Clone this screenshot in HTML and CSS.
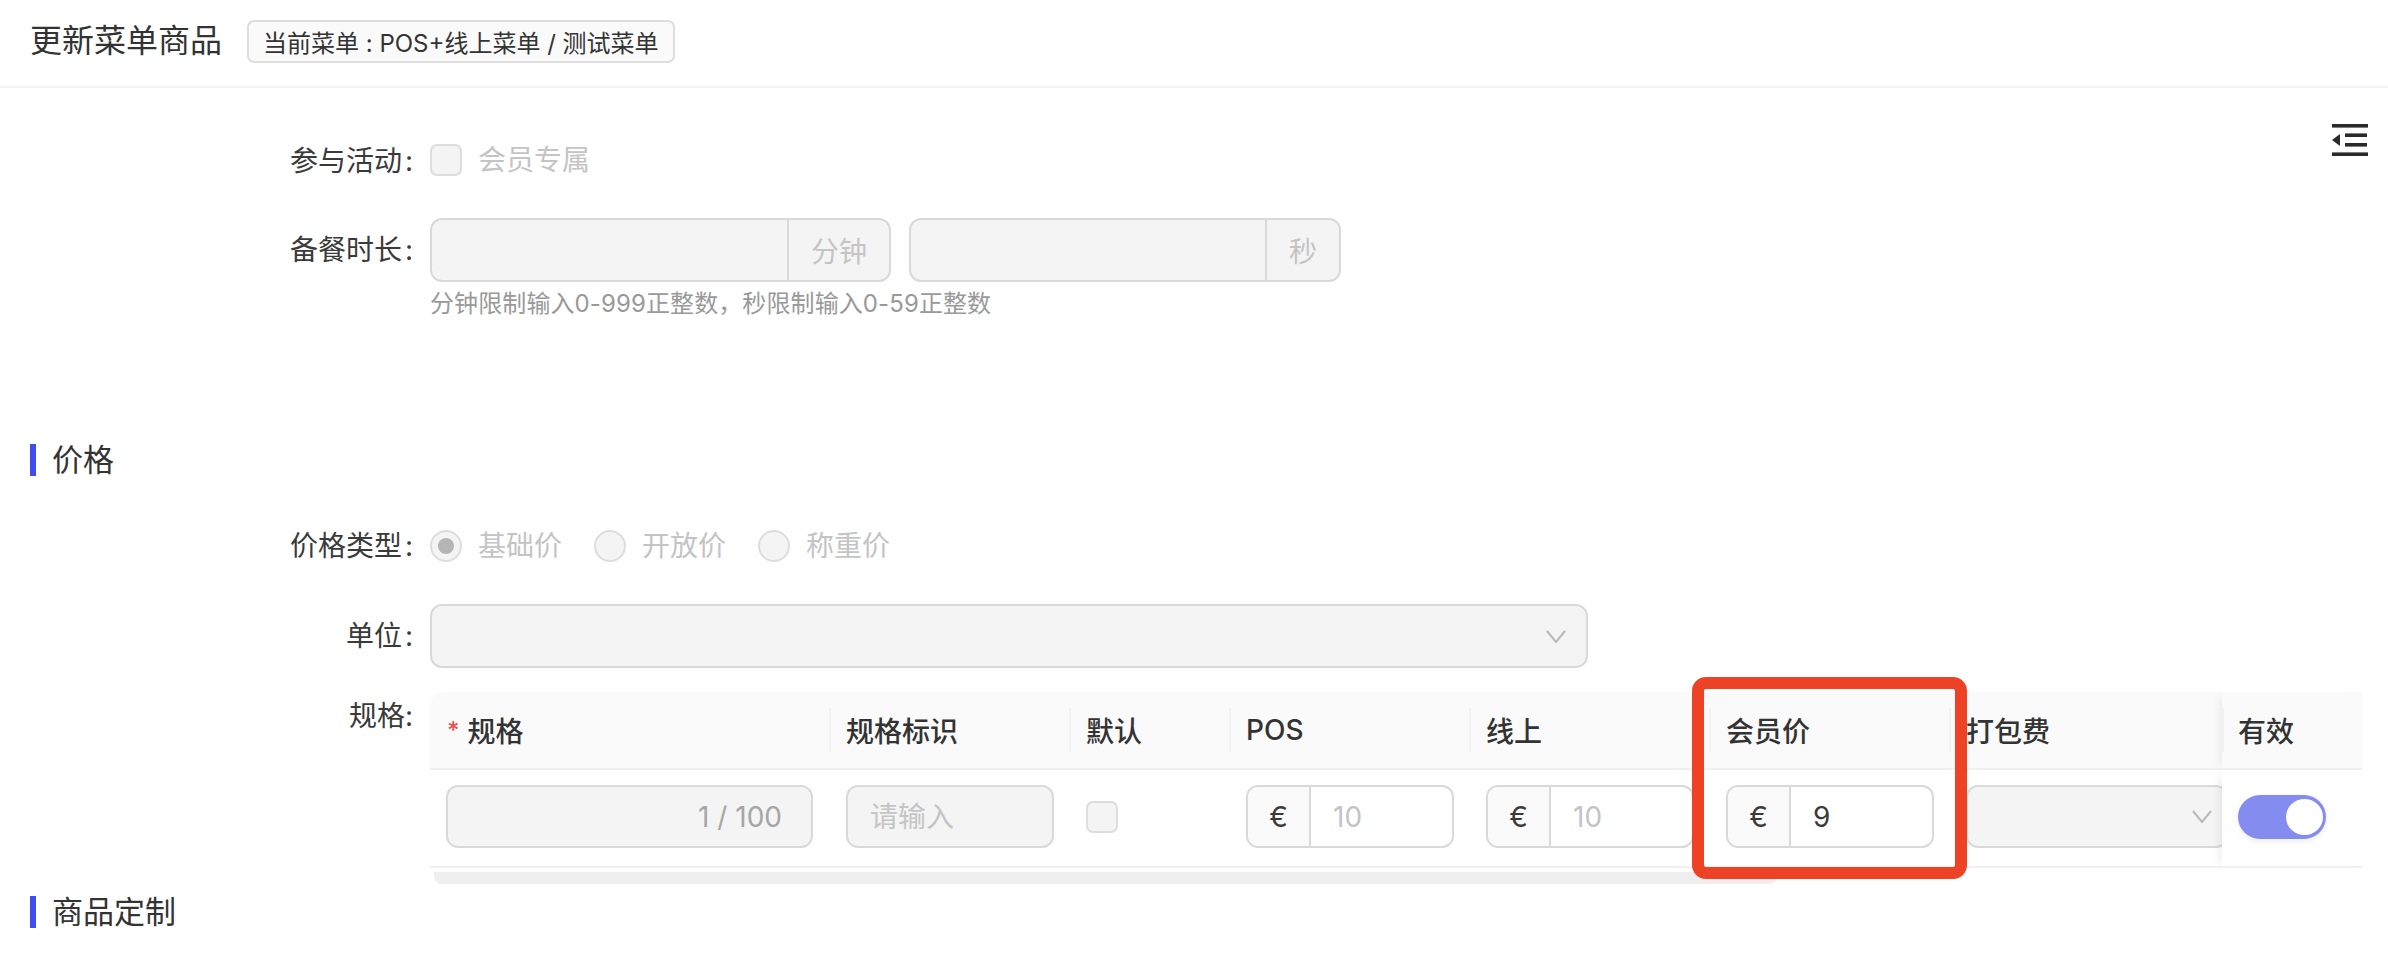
FILE: index.html
```html
<!DOCTYPE html>
<html lang="zh-CN">
<head>
  <meta charset="UTF-8">
  <title>更新菜单商品</title>
  <link rel="stylesheet" href="styles.css">
</head>
<body>

  <!-- Header -->
  <header class="page-header">
    <h1>更新菜单商品</h1>
    <span class="menu-tag">当前菜单 : POS+线上菜单 / 测试菜单</span>
  </header>

  <main class="content">
    <svg class="outline-toggle" width="36" height="32" viewBox="0 0 36 32" fill="#2b2b2b">
      <rect x="0" y="0" width="36" height="3.6"/>
      <rect x="13" y="9.4" width="22" height="3.6"/>
      <rect x="13" y="19" width="22" height="3.6"/>
      <rect x="0" y="28.4" width="36" height="3.6"/>
      <path d="M0 16 L8 10 L8 22 Z"/>
    </svg>

    <div class="form-row first-row">
      <label class="field-label">参与活动<span class="colon">:</span></label>
      <span class="checkbox"></span>
      <span class="option-text">会员专属</span>
    </div>

    <div class="form-row time-row">
      <label class="field-label">备餐时长<span class="colon">:</span></label>
      <div class="addon-input minutes">
        <input type="text" disabled>
        <span class="addon">分钟</span>
      </div>
      <div class="addon-input seconds">
        <input type="text" disabled>
        <span class="addon">秒</span>
      </div>
    </div>
    <p class="hint">分钟限制输入0-999正整数，秒限制输入0-59正整数</p>

    <!-- Price -->
    <h2 class="section-title price-title">价格</h2>

    <div class="form-row price-type-row">
      <label class="field-label">价格类型<span class="colon">:</span></label>
      <div class="radio-group">
        <span class="radio checked"></span><span class="option-text">基础价</span>
      </div>
      <div class="radio-group">
        <span class="radio"></span><span class="option-text">开放价</span>
      </div>
      <div class="radio-group">
        <span class="radio"></span><span class="option-text">称重价</span>
      </div>
    </div>

    <div class="form-row unit-row">
      <label class="field-label">单位<span class="colon">:</span></label>
      <div class="select unit-select">
        <svg class="chevron" width="20" height="13" viewBox="0 0 20 13"><path d="M1 1 L10 12 L19 1"/></svg>
      </div>
    </div>

    <div class="form-row spec-row">
      <label class="field-label spec-label">规格<span class="colon">:</span></label>
      <div class="spec-table">
        <div class="spec-grid">
          <div class="th first"><i class="required">*</i>规格</div>
          <div class="th">规格标识</div>
          <div class="th">默认</div>
          <div class="th">POS</div>
          <div class="th">线上</div>
          <div class="th">会员价</div>
          <div class="th">打包费</div>
          <div class="th fixed">有效</div>

          <div class="td first">
            <div class="text-input name-input"><span class="count">1 / 100</span></div>
          </div>
          <div class="td">
            <input class="text-input" type="text" placeholder="请输入" disabled>
          </div>
          <div class="td"><span class="checkbox"></span></div>
          <div class="td">
            <div class="price-input"><span class="currency">€</span><span class="muted">10</span></div>
          </div>
          <div class="td">
            <div class="price-input"><span class="currency">€</span><span class="muted">10</span></div>
          </div>
          <div class="td">
            <div class="price-input"><span class="currency">€</span><span>9</span></div>
          </div>
          <div class="td clip">
            <div class="select fee-select">
              <svg class="chevron" width="20" height="13" viewBox="0 0 20 13"><path d="M1 1 L10 12 L19 1"/></svg>
            </div>
          </div>
          <div class="td fixed"><span class="switch"><span class="knob"></span></span></div>
        </div>
        <div class="scroll-track"><div class="scroll-thumb"></div></div>
        <div class="highlight"></div>
      </div>
    </div>

    <h2 class="section-title custom-title">商品定制</h2>
  </main>

</body>
</html>
```

FILE: styles.css
```css
* {
  margin: 0;
  padding: 0;
  box-sizing: border-box;
}
body {
  font-family: Inter, "Noto Sans CJK SC", sans-serif;
  background-color: #fff;
  color: #3a3a3a;
  overflow: hidden;
}
.page-header {
  height: 88px;
  padding: 0 0 4px 30px;
  display: flex;
  align-items: center;
  gap: 25px;
  border-bottom: 2px solid #f3f3f3;
}
.page-header h1 {
  font-size: 32px;
  line-height: 40px;
  font-weight: 400;
  color: #333;
}
.menu-tag {
  height: 43px;
  padding: 0 14px;
  display: flex;
  align-items: center;
  font-size: 24px;
  color: #333;
  background-color: #fafafa;
  border: 2px solid #ddd;
  border-radius: 7px;
}
.content {
  position: relative;
  padding: 56px 0 0 30px;
}
.outline-toggle {
  position: absolute;
  top: 36px;
  right: 20px;
}
.form-row {
  display: flex;
  align-items: center;
}
.field-label {
  width: 383px;
  margin-right: 17px;
  text-align: right;
  font-size: 28px;
  line-height: 32px;
  white-space: nowrap;
}
.colon {
  margin-left: 3px;
}
.first-row {
  height: 32px;
}
.first-row .field-label {
  padding-top: 2px;
}
.option-text {
  margin-left: 16px;
  font-size: 28px;
  color: #c4c4c4;
  line-height: 32px;
}
.checkbox {
  width: 32px;
  height: 32px;
  background-color: #f4f4f4;
  border: 2px solid #ddd;
  border-radius: 7px;
  display: block;
}
.time-row {
  margin-top: 42px;
}
.addon-input {
  height: 64px;
  display: flex;
  background-color: #f4f4f4;
  border: 2px solid #d9d9d9;
  border-radius: 12px;
  overflow: hidden;
}
.addon-input input {
  flex: 1;
  min-width: 0;
  border: none;
  background: none;
}
.addon {
  display: flex;
  align-items: center;
  justify-content: center;
  font-size: 28px;
  color: #c4c4c4;
  border-left: 2px solid #d9d9d9;
}
.minutes {
  width: 461px;
  margin-right: 18px;
}
.minutes .addon {
  width: 102px;
}
.seconds {
  width: 432px;
}
.seconds .addon {
  width: 74px;
}
.hint {
  margin: 8px 0 0 400px;
  font-size: 24px;
  line-height: 28px;
  letter-spacing: 0.1px;
  color: #999;
}
.section-title {
  height: 32px;
  padding: 0 0 6px 16px;
  display: flex;
  align-items: center;
  font-size: 31px;
  font-weight: 400;
  color: #333;
  border-left: 6px solid #3f4df0;
}
.price-title {
  margin-top: 126px;
}
.price-type-row {
  margin-top: 54px;
}
.radio-group {
  display: flex;
  align-items: center;
  margin-right: 32px;
}
.radio {
  width: 32px;
  height: 32px;
  display: flex;
  align-items: center;
  justify-content: center;
  background-color: #f4f4f4;
  border: 2px solid #ddd;
  border-radius: 50%;
}
.radio.checked::after {
  content: "";
  width: 16px;
  height: 16px;
  background-color: #b5b5b5;
  border-radius: 50%;
}
.unit-row {
  margin-top: 42px;
}
.select {
  height: 64px;
  display: flex;
  align-items: center;
  justify-content: flex-end;
  background-color: #f4f4f4;
  border: 2px solid #d9d9d9;
  border-radius: 12px;
}
.unit-select {
  width: 1158px;
  padding-right: 20px;
}
.chevron {
  fill: none;
  stroke: #b9b9b9;
  stroke-width: 2;
}
.spec-row {
  margin-top: 24px;
  align-items: flex-start;
}
.spec-label {
  margin-top: 8px;
}
.spec-label .colon {
  margin-left: 0;
}
.spec-table {
  position: relative;
  width: 1932px;
}
.spec-grid {
  display: grid;
  grid-template-columns: 399px 240px 160px 240px 240px 240px 273px 140px;
}
.th {
  position: relative;
  height: 78px;
  padding-left: 17px;
  display: flex;
  align-items: center;
  font-size: 28px;
  font-weight: 500;
  color: #333;
  background-color: #fafafa;
  border-bottom: 2px solid #f0f0f0;
}
.th::before {
  content: "";
  position: absolute;
  left: 0;
  top: 16px;
  height: 44px;
  width: 2px;
  background-color: #f2f2f2;
}
.th.first {
  padding-left: 17px;
  border-top-left-radius: 14px;
}
.th.first::before {
  display: none;
}
.required {
  margin-right: 8px;
  font-size: 24px;
  font-style: normal;
  color: #e8524a;
}
.td {
  height: 98px;
  padding: 0 0 3px 17px;
  display: flex;
  align-items: center;
  border-bottom: 2px solid #f0f0f0;
}
.td.first {
  padding-left: 16px;
}
.td.clip {
  overflow: hidden;
}
.fixed {
  position: relative;
  box-shadow: -8px 0 8px -4px rgba(0, 0, 0, 0.05);
  padding-left: 16px;
}
.td.fixed {
  background-color: #fff;
}
.text-input {
  width: 208px;
  height: 63px;
  padding: 0 22px;
  font-family: inherit;
  font-size: 28px;
  background-color: #f4f4f4;
  border: 2px solid #d9d9d9;
  border-radius: 12px;
}
.text-input::placeholder {
  color: #c4c4c4;
}
.name-input {
  width: 367px;
  padding-right: 29px;
  display: flex;
  align-items: center;
  justify-content: flex-end;
}
.count {
  font-size: 28px;
  color: #a6a6a6;
}
.price-input {
  width: 208px;
  height: 63px;
  display: flex;
  align-items: center;
  font-size: 28px;
  background-color: #fff;
  border: 2px solid #d9d9d9;
  border-radius: 12px;
  overflow: hidden;
}
.currency {
  width: 63px;
  height: 100%;
  margin-right: 22px;
  display: flex;
  align-items: center;
  justify-content: center;
  background-color: #fafafa;
  border-right: 2px solid #d9d9d9;
}
.muted {
  color: #c4c4c4;
}
.fee-select {
  flex: none;
  width: 262px;
  height: 63px;
  padding-right: 14px;
}
.switch {
  width: 88px;
  height: 44px;
  padding: 4px 3px;
  display: flex;
  justify-content: flex-end;
  background-color: #848cf0;
  border-radius: 22px;
  box-shadow: 0 2px 6px rgba(0, 0, 0, 0.08);
}
.knob {
  width: 37px;
  height: 36px;
  background-color: #fff;
  border-radius: 50%;
}
.scroll-track {
  padding: 4px 0 0 4px;
}
.scroll-thumb {
  width: 1343px;
  height: 12px;
  background-color: #efefef;
  border-radius: 0 0 8px 8px;
}
.highlight {
  position: absolute;
  left: 1262px;
  top: -15px;
  width: 275px;
  height: 202px;
  border: 12px solid #ee4227;
  border-radius: 14px;
}
.custom-title {
  margin-top: 12px;
}
```
